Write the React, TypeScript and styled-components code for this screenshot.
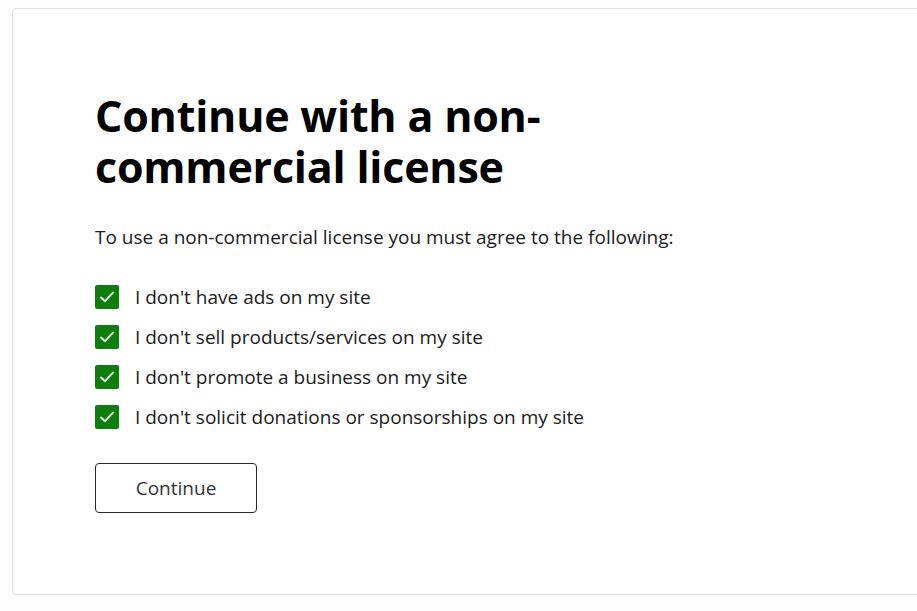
import styled, { createGlobalStyle } from "styled-components";

const GlobalStyle = createGlobalStyle`
  html, body {
    margin: 0;
    padding: 0;
    background-color: #fcfcfc;
    font-family: "Open Sans", "Noto Sans", sans-serif;
    color: #1b1b1b;
  }
`;

const Page = styled.div`
  height: 611px;
  padding: 8px 0 16px 12px;
  box-sizing: border-box;
  overflow: hidden;
`;

const Card = styled.section`
  height: 587px;
  margin-right: -20px;
  box-sizing: border-box;
  background-color: #ffffff;
  border: 1px solid #e1e1e1;
  border-radius: 4px;
  padding: 81px 0 0 82px;
`;

const Title = styled.h1`
  margin: 0;
  max-width: 500px;
  font-size: 43px;
  line-height: 51px;
  font-weight: 700;
  color: #000000;
  letter-spacing: -0.2px;
`;

const Intro = styled.p`
  margin: 32px 0 0;
  font-size: 19px;
  line-height: 26px;
  color: #1b1b1b;
`;

const List = styled.ul`
  list-style: none;
  margin: 35px 0 0;
  padding: 0;
  display: flex;
  flex-direction: column;
  gap: 16px;
`;

const Item = styled.li`
  display: flex;
  align-items: center;
  gap: 16px;
  height: 24px;
  font-size: 19px;
  color: #1b1b1b;
`;

const Box = styled.span`
  width: 24px;
  height: 24px;
  border-radius: 2px;
  background-color: #0e7f0e;
  display: flex;
  align-items: center;
  justify-content: center;
  flex-shrink: 0;
`;

const Button = styled.button`
  margin-top: 34px;
  width: 162px;
  height: 50px;
  background-color: #ffffff;
  border: 1px solid #2b2b2b;
  border-radius: 4px;
  font-family: inherit;
  font-size: 19px;
  color: #333333;
  cursor: pointer;
`;

const items = [
  "I don't have ads on my site",
  "I don't sell products/services on my site",
  "I don't promote a business on my site",
  "I don't solicit donations or sponsorships on my site",
];

function Check() {
  return (
    <svg width="18" height="18" viewBox="0 0 18 18" fill="none">
      <path
        d="M3 9.5 L7 13.2 L15 4.6"
        stroke="#ffffff"
        strokeWidth="1.8"
        strokeLinecap="round"
        strokeLinejoin="round"
      />
    </svg>
  );
}

export default function App() {
  return (
    <>
      <GlobalStyle />
      <Page>
        <Card>
          <Title>Continue with a non-commercial license</Title>
          <Intro>To use a non-commercial license you must agree to the following:</Intro>
          <List>
            {items.map((text) => (
              <Item key={text}>
                <Box>
                  <Check />
                </Box>
                {text}
              </Item>
            ))}
          </List>
          <Button type='button'>Continue</Button>
        </Card>
      </Page>
    </>
  );
}
